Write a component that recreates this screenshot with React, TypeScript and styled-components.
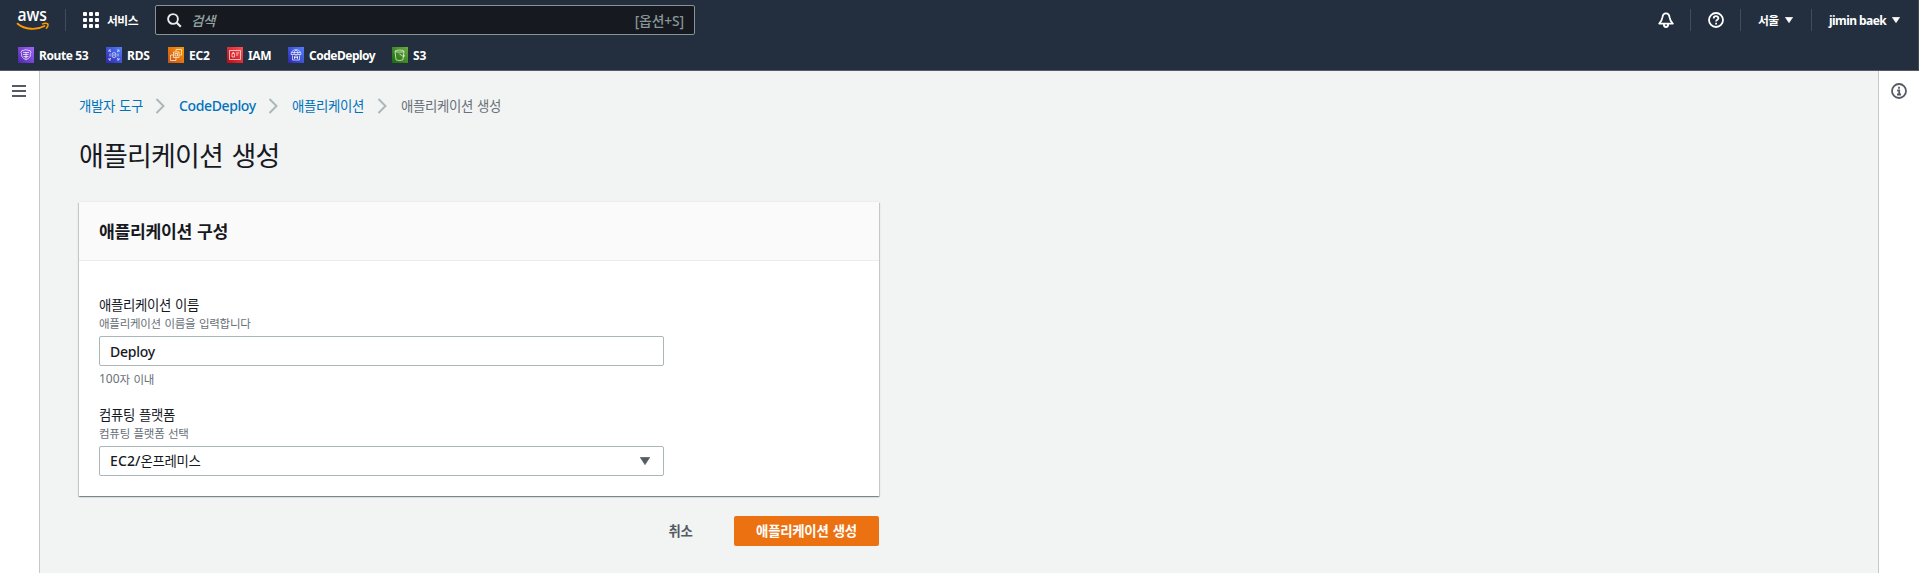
import React from 'react';
import styled, { createGlobalStyle } from 'styled-components';

const Global = createGlobalStyle`
  * { box-sizing: border-box; }
  body { margin: 0; background: #f2f3f3; color: #16191f; font-family: "Noto Sans", "Noto Sans CJK KR", sans-serif; font-size: 14px; overflow: hidden; }
  h1, h2, p { margin: 0; }
`;

const Page = styled.div`
  display: flex;
  flex-direction: column;
  height: 573px;
`;

/* $ls tunes the tracking, $ws the word gaps, $up lifts the baseline inside a centred row */
const Text = styled.span<{ $w?: number; $ls?: number; $ws?: number; $up?: number; $size?: number; $weight?: number; $color?: string; $italic?: boolean; $push?: boolean }>`
  display: block;
  flex: none;
  white-space: nowrap;
  width: ${p => (p.$w ? p.$w + 'px' : 'auto')};
  margin-left: ${p => (p.$push ? 'auto' : 0)};
  padding-bottom: ${p => p.$up ?? 0}px;
  letter-spacing: ${p => p.$ls ?? 0}px;
  word-spacing: ${p => p.$ws ?? 0}px;
  font-size: ${p => p.$size ?? 14}px;
  font-weight: ${p => p.$weight ?? 400};
  color: ${p => p.$color ?? 'inherit'};
  font-style: ${p => (p.$italic ? 'italic' : 'normal')};
`;

const Header = styled.header`
  flex: none;
  height: 71px;
  background: #232f3e;
  border-bottom: 1px solid #545b64;
  border-right: 1px solid #3f4a57;
  color: #fff;
`;

const TopBar = styled.div`
  display: flex;
  align-items: center;
  height: 40px;
  padding-left: 17px;
  padding-right: 18px;
`;

const Divider = styled.span<{ $before: number; $after: number }>`
  flex: none;
  width: 1px;
  height: 22px;
  background: #414d5c;
  margin: 0 ${p => p.$after}px 0 ${p => p.$before}px;
`;

const Apps = styled.span`
  display: grid;
  grid-template-columns: repeat(3, 4px);
  gap: 2px;
  margin-right: 8px;
  i { height: 4px; background: #fff; border-radius: 1px; }
`;

const Search = styled.div`
  display: flex;
  align-items: center;
  width: 540px;
  height: 30px;
  margin: 0 auto 0 17px;
  padding: 0 10px 0 11px;
  background: #16191f;
  border: 1px solid #879596;
  border-radius: 2px;
`;

const Glyph = styled.svg<{ $mr?: number; $ml?: number }>`
  display: block;
  flex: none;
  margin-right: ${p => p.$mr ?? 0}px;
  margin-left: ${p => p.$ml ?? 0}px;
`;

const Favorites = styled.nav`
  display: flex;
  align-items: center;
  height: 30px;
  padding-left: 18px;
`;

const Favorite = styled.a`
  display: flex;
  align-items: center;
  margin-right: 18px;
`;

const Body = styled.div`
  display: flex;
  flex: 1;
  min-height: 0;
`;

const Rail = styled.aside<{ $side: 'left' | 'right' }>`
  flex: none;
  width: ${p => (p.$side === 'left' ? 40 : 41)}px;
  background: #fff;
  padding: 12px 0 0 12px;
  border-${p => (p.$side === 'left' ? 'right' : 'left')}: 1px solid #c4c8ca;
`;

const Main = styled.main`
  flex: 1;
  padding: 23px 39px 0;
`;

const Crumbs = styled.nav`
  display: flex;
  align-items: center;
  height: 24px;
  color: #0073bb;
`;

const Title = styled.h1`
  font-weight: 400;
  line-height: 36px;
  margin-top: 20px;
`;

const Card = styled.section`
  width: 800px;
  height: 294px;
  margin-top: 28px;
  background: #fff;
  box-shadow: 0 1px 1px 0 rgba(0, 28, 36, 0.3), 1px 1px 1px 0 rgba(0, 28, 36, 0.15), -1px 1px 1px 0 rgba(0, 28, 36, 0.15), 0 -1px 0 0 #eaeded;
`;

const CardHeader = styled.div`
  display: flex;
  align-items: center;
  height: 59px;
  padding: 0 20px;
  background: #fafafa;
  border-bottom: 1px solid #eaeded;
`;

const Fields = styled.div`
  padding: 34px 20px 0;
`;

const Field = styled.div`
  height: 110px;
`;

const Line = styled.div<{ $h: number }>`
  display: flex;
  align-items: center;
  height: ${p => p.$h}px;
`;

const Box = styled.div`
  display: flex;
  align-items: center;
  width: 565px;
  height: 30px;
  margin: 4px 0 4px;
  padding: 0 13px 0 10px;
  border: 1px solid #aab7b8;
  border-radius: 2px;
`;

const Caret = styled.span`
  margin-left: auto;
`;

const Actions = styled.div`
  display: flex;
  align-items: center;
  justify-content: flex-end;
  width: 800px;
  margin-top: 20px;
`;

const Button = styled.button<{ $primary?: boolean }>`
  display: flex;
  align-items: center;
  justify-content: center;
  height: 30px;
  width: ${p => (p.$primary ? 145 : 67)}px;
  margin-left: ${p => (p.$primary ? 20 : 0)}px;
  padding: 0;
  border: 0;
  border-radius: 2px;
  font-family: inherit;
  background: ${p => (p.$primary ? '#ec7211' : 'transparent')};
  color: ${p => (p.$primary ? '#fff' : '#545b64')};
`;

const LogoSvg = styled.svg`
  display: block;
  flex: none;
  overflow: visible;
`;

const AwsLogo = () => (
  <LogoSvg width="32" height="20" viewBox="0 0 32 20">
    <text x="0.500" y="11" fontFamily="Open Sans, sans-serif" fontSize="18" fontWeight="600" fill="#fff" textLength="29.5" lengthAdjust="spacingAndGlyphs">aws</text>
    <path d="M.6 13.700C8 19.600 19 20.600 27.500 16" fill="none" stroke="#f90" strokeWidth="1.900" strokeLinecap="round" />
    <path d="M25 14.200c2-.9 5-.9 5.800-.4.500 1-.2 3.300-1.800 4.900" fill="none" stroke="#f90" strokeWidth="1.400" />
  </LogoSvg>
);

const Triangle = ({ size = 8, h = 6, color = '#fff', ml = 0 }: { size?: number; h?: number; color?: string; ml?: number }) => (
  <Glyph $ml={ml} width={size} height={h} viewBox="0 0 8 6" preserveAspectRatio="none">
    <path d="M.3.3h7.400L4 5.700z" fill={color} stroke={color} strokeWidth=".6" strokeLinejoin="round" />
  </Glyph>
);

const Chevron = () => (
  <Glyph $ml={12} $mr={14} width="10" height="16" viewBox="0 0 10 16">
    <path d="M1.500 1l7 7-7 7" fill="none" stroke="#aab7b8" strokeWidth="1.900" />
  </Glyph>
);

const services = [
  { name: 'Route 53', w: 49, ls: -0.4, from: '#4d27a8', to: '#a166ff', art: <path d="M4 3.500c1.500.5 2.500-.8 4-.8s2.500 1.300 4 .8l1 2c-1 1-.4 2-.7 3.500-.6 2-2.300 2.500-4.300 4-2-1.500-3.700-2-4.300-4-.3-1.500.3-2.500-.7-3.500zM5 5.500h6M5 7.500h5.500M5.500 9.500h5M6.500 11h3M8 5v6" /> },
  { name: 'RDS', w: 23, ls: -0.2, from: '#2e27ad', to: '#527fff', art: <path d="M3 5V3h2M11 3h2v2M3 11v2h2M13 11v2h-2M3.500 3.500l1.500 1.500M12.500 3.500L11 5M3.500 12.500L5 11M12.500 12.500L11 11M6.200 6.300c.8-.8 2.800-.8 3.600 0v3.500c-.8.8-2.800.8-3.600 0zM4 6.500v3M12 6.500v3M8 7v2" /> },
  { name: 'EC2', w: 20, ls: -0.2, from: '#c8511b', to: '#f90', art: <path d="M5.500 5h5.500v5.500H5.500zM8 4.500V2.500h5.500v5.500h-2M5 8H2.500v5.500H8v-2.500M7 6.500h2.500V9H7z" /> },
  { name: 'IAM', w: 22, ls: -0.4, from: '#bd0816', to: '#ff5252', art: <path d="M2.500 3.500h11v9h-11zM5 6.500h2.500v3.500H5zM5.500 5.500h1.500M9 6h3M9 8h2" /> },
  { name: 'CodeDeploy', w: 65, ls: -0.5, from: '#2e27ad', to: '#527fff', art: <path d="M3 7.500c0-6.500 10-6.500 10 0zM6 7.300c0-2 .8-4 2-4s2 2 2 4M3.500 5.500h9M4.500 8.500v4.500h7V8.500M6.500 9v3M9.500 9v3M8 8v2M6 10.500h4" /> },
  { name: 'S3', w: 16, ls: -0.2, from: '#1b660f', to: '#6cae3e', art: <path d="M3 4.200c1-1.500 8-1.500 9 0l-1 8.500c-1.500 1-5.500 1-7 0zM3 4.200c1 1.200 8 1.200 9 0M7.500 7l3 2c2 .8 3 .2 1-1.500" /> },
];

const App = () => (
  <Page>
    <Global />
    <Header>
      <TopBar>
        <AwsLogo />
        <Divider $before={16} $after={17} />
        <Apps>{Array.from({ length: 9 }, (_, i) => <i key={i} />)}</Apps>
        <Text $w={31} $size={11.8} $weight={700} $ls={-0.5} $up={1}>서비스</Text>
        <Search>
          <Glyph $mr={9} width="15" height="15" viewBox="0 0 15 15">
            <circle cx="6" cy="6" r="4.900" fill="none" stroke="#eaeded" strokeWidth="1.900" />
            <path d="M9.500 9.500l4.300 4.300" stroke="#eaeded" strokeWidth="2.200" />
          </Glyph>
          <Text $size={13.5} $ls={-0.4} $up={1} $weight={500} $italic $color="#95a5a6">검색</Text>
          <Text $size={13.8} $ls={-0.1} $up={1} $weight={500} $color="#879596" $push>[옵션+S]</Text>
        </Search>
        <Glyph width="16" height="16" viewBox="0 0 16 16" fill="none" stroke="#fff" strokeWidth="1.800">
          <path d="M1.200 11.600C3 10 4 8.400 4.500 5.200c.5-5 6.500-5 7 0 .5 3.200 1.500 4.800 3.300 6.400zM5.800 12c0 4 4.400 4 4.400 0" strokeLinejoin="round" />
        </Glyph>
        <Divider $before={16} $after={17} />
        <Glyph width="16" height="16" viewBox="0 0 16 16" fill="none" stroke="#fff" strokeWidth="1.800">
          <circle cx="8" cy="8" r="7" />
          <path d="M5.700 6.500c0-3 4.700-3 4.700-.2 0 1.600-2.300 1.400-2.300 3.200M8.100 10.700v1.700" />
        </Glyph>
        <Divider $before={16} $after={17} />
        <Text $w={22} $size={11.800} $weight={700} $ls={-0.5} $up={1}>서울</Text>
        <Triangle ml={5} />
        <Divider $before={18} $after={17} />
        <Text $w={59} $size={12} $weight={700} $ls={-0.55}>jimin baek</Text>
        <Triangle ml={4} />
      </TopBar>
      <Favorites>
        {services.map((s, i) => (
          <Favorite key={s.name}>
            <Glyph $mr={5} width="16" height="16" viewBox="0 0 16 16">
              <defs>
                <linearGradient id={`g${i}`} x1="0" y1="1" x2="1" y2="0">
                  <stop offset="0" stopColor={s.from} />
                  <stop offset="1" stopColor={s.to} />
                </linearGradient>
              </defs>
              <rect width="16" height="16" fill={`url(#g${i})`} />
              <g fill="none" stroke="#fff" strokeWidth=".8" opacity=".85">{s.art}</g>
            </Glyph>
            <Text $w={s.w} $size={12} $weight={700} $ls={s.ls}>{s.name}</Text>
          </Favorite>
        ))}
      </Favorites>
    </Header>
    <Body>
      <Rail $side="left">
        <Glyph width="14" height="16" viewBox="0 0 14 16">
          <path d="M0 3h14M0 8h14M0 13h14" stroke="#545b64" strokeWidth="2" />
        </Glyph>
      </Rail>
      <Main>
        <Crumbs>
          <Text $w={64} $size={13.400} $ls={-0.33} $ws={0.8} $up={2}>개발자 도구</Text>
          <Chevron />
          <Text $w={77} $ls={-0.38} $up={2} $weight={500}>CodeDeploy</Text>
          <Chevron />
          <Text $w={73} $size={13.400} $ls={-0.33} $up={2}>애플리케이션</Text>
          <Chevron />
          <Text $size={13.400} $ls={-0.33} $ws={0.8} $up={2} $color="#687078">애플리케이션 생성</Text>
        </Crumbs>
        <Title><Text $size={27} $ls={-0.85} $ws={2.5}>애플리케이션 생성</Text></Title>
        <Card>
          <CardHeader><Text as="h2" $size={17.200} $weight={700} $ls={-0.32} $ws={1} $up={2}>애플리케이션 구성</Text></CardHeader>
          <Fields>
            <Field>
              <Line $h={22}><Text $size={13.400} $ls={-0.33} $ws={0.8} $up={4}>애플리케이션 이름</Text></Line>
              <Line $h={15}><Text $size={11.500} $ls={-0.26} $ws={0.8} $up={3} $color="#687078">애플리케이션 이름을 입력합니다</Text></Line>
              <Box><Text $weight={500} $ls={-0.25}>Deploy</Text></Box>
              <Line $h={18}>
                <Text $size={12} $up={1} $color="#687078">100</Text>
                <Text $size={11.500} $ls={-0.26} $ws={0.8} $up={1} $color="#687078">자 이내</Text>
              </Line>
            </Field>
            <Field>
              <Line $h={22}><Text $size={13.400} $ls={-0.33} $ws={0.8} $up={4}>컴퓨팅 플랫폼</Text></Line>
              <Line $h={15}><Text $size={11.500} $ls={-0.26} $ws={0.8} $up={3} $color="#687078">컴퓨팅 플랫폼 선택</Text></Line>
              <Box>
                <Text $ls={0.1} $weight={500} $up={1}>EC2/</Text>
                <Text $size={13.400} $ls={-0.33} $up={2}>온프레미스</Text>
                <Caret><Triangle size={10} h={8} color="#545b64" /></Caret>
              </Box>
            </Field>
          </Fields>
        </Card>
        <Actions>
          <Button><Text $size={13.400} $weight={700} $ls={-0.33} $up={3}>취소</Text></Button>
          <Button $primary><Text $size={13.400} $weight={700} $ls={-0.25} $ws={1} $up={2}>애플리케이션 생성</Text></Button>
        </Actions>
      </Main>
      <Rail $side="right">
        <Glyph width="16" height="16" viewBox="0 0 16 16" fill="none" stroke="#545b64" strokeWidth="1.800">
          <circle cx="8" cy="8" r="7" />
          <path d="M8 3.800v2M6.200 7.500h2v4M6 11.500h4" />
        </Glyph>
      </Rail>
    </Body>
  </Page>
);

export default App;
